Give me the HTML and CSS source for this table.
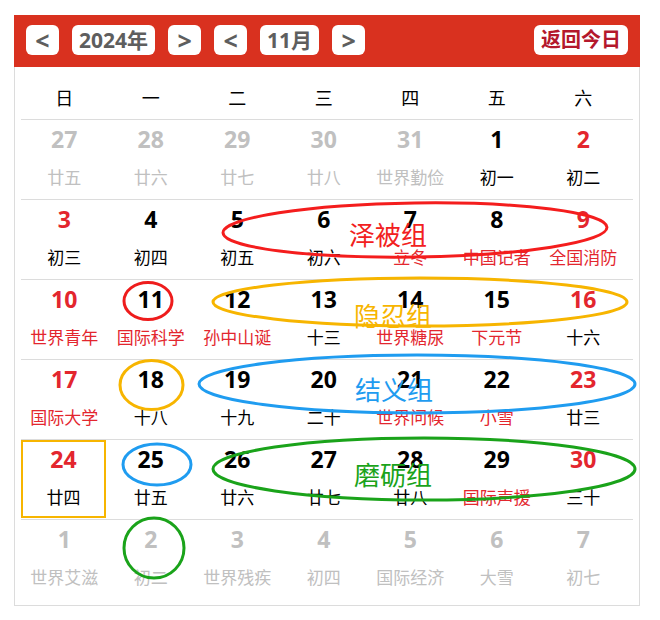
FILE: index.html
```html
<!DOCTYPE html>
<html lang="zh">
<head>
<meta charset="utf-8">
<title>日历</title>
<link rel="stylesheet" href="styles.css">
</head>
<body>
<div class="page">
  <div class="cal">
    <div class="bar">
      <button class="btn arrow">&lt;</button>
      <button class="btn">2024年</button>
      <button class="btn arrow">&gt;</button>
      <button class="btn arrow">&lt;</button>
      <button class="btn">11月</button>
      <button class="btn arrow">&gt;</button>
      <button class="btn today-btn">返回今日</button>
    </div>
    <div class="body">
      <div class="row week">
        <div class="wd">日</div><div class="wd">一</div><div class="wd">二</div><div class="wd">三</div><div class="wd">四</div><div class="wd">五</div><div class="wd">六</div>
      </div>
      <div class="row">
        <div class="cell other"><span class="num">27</span><span class="lunar">廿五</span></div>
        <div class="cell other"><span class="num">28</span><span class="lunar">廿六</span></div>
        <div class="cell other"><span class="num">29</span><span class="lunar">廿七</span></div>
        <div class="cell other"><span class="num">30</span><span class="lunar">廿八</span></div>
        <div class="cell other"><span class="num">31</span><span class="lunar">世界勤俭</span></div>
        <div class="cell"><span class="num">1</span><span class="lunar">初一</span></div>
        <div class="cell weekend"><span class="num">2</span><span class="lunar">初二</span></div>
      </div>
      <div class="row">
        <div class="cell weekend"><span class="num">3</span><span class="lunar">初三</span></div>
        <div class="cell"><span class="num">4</span><span class="lunar">初四</span></div>
        <div class="cell"><span class="num">5</span><span class="lunar">初五</span></div>
        <div class="cell"><span class="num">6</span><span class="lunar">初六</span></div>
        <div class="cell"><span class="num">7</span><span class="lunar fest">立冬</span></div>
        <div class="cell"><span class="num">8</span><span class="lunar fest">中国记者</span></div>
        <div class="cell weekend"><span class="num">9</span><span class="lunar fest">全国消防</span></div>
      </div>
      <div class="row">
        <div class="cell weekend"><span class="num">10</span><span class="lunar fest">世界青年</span></div>
        <div class="cell"><span class="num">11</span><span class="lunar fest">国际科学</span></div>
        <div class="cell"><span class="num">12</span><span class="lunar fest">孙中山诞</span></div>
        <div class="cell"><span class="num">13</span><span class="lunar">十三</span></div>
        <div class="cell"><span class="num">14</span><span class="lunar fest">世界糖尿</span></div>
        <div class="cell"><span class="num">15</span><span class="lunar fest">下元节</span></div>
        <div class="cell weekend"><span class="num">16</span><span class="lunar">十六</span></div>
      </div>
      <div class="row">
        <div class="cell weekend"><span class="num">17</span><span class="lunar fest">国际大学</span></div>
        <div class="cell"><span class="num">18</span><span class="lunar">十八</span></div>
        <div class="cell"><span class="num">19</span><span class="lunar">十九</span></div>
        <div class="cell"><span class="num">20</span><span class="lunar">二十</span></div>
        <div class="cell"><span class="num">21</span><span class="lunar fest">世界问候</span></div>
        <div class="cell"><span class="num">22</span><span class="lunar fest">小雪</span></div>
        <div class="cell weekend"><span class="num">23</span><span class="lunar">廿三</span></div>
      </div>
      <div class="row">
        <div class="cell weekend current"><span class="num">24</span><span class="lunar">廿四</span></div>
        <div class="cell"><span class="num">25</span><span class="lunar">廿五</span></div>
        <div class="cell"><span class="num">26</span><span class="lunar">廿六</span></div>
        <div class="cell"><span class="num">27</span><span class="lunar">廿七</span></div>
        <div class="cell"><span class="num">28</span><span class="lunar">廿八</span></div>
        <div class="cell"><span class="num">29</span><span class="lunar fest">国际声援</span></div>
        <div class="cell weekend"><span class="num">30</span><span class="lunar">三十</span></div>
      </div>
      <div class="row last">
        <div class="cell other"><span class="num">1</span><span class="lunar">世界艾滋</span></div>
        <div class="cell other"><span class="num">2</span><span class="lunar">初二</span></div>
        <div class="cell other"><span class="num">3</span><span class="lunar">世界残疾</span></div>
        <div class="cell other"><span class="num">4</span><span class="lunar">初四</span></div>
        <div class="cell other"><span class="num">5</span><span class="lunar">国际经济</span></div>
        <div class="cell other"><span class="num">6</span><span class="lunar">大雪</span></div>
        <div class="cell other"><span class="num">7</span><span class="lunar">初七</span></div>
      </div>
    </div>
  </div>
  <svg class="marks" viewBox="0 0 660 620" width="660" height="620">
    <g fill="none" stroke-width="3">
      <ellipse cx="415" cy="230" rx="192" ry="27" stroke="#f41d1d" transform="rotate(-0.8 415 230)"/>
      <ellipse cx="148" cy="301" rx="24" ry="18.5" stroke="#ee1c1c"/>
      <ellipse cx="420" cy="302" rx="207" ry="24" stroke="#f7b500"/>
      <ellipse cx="151.5" cy="385" rx="31.5" ry="24.5" stroke="#f7b500"/>
      <ellipse cx="417" cy="384" rx="218" ry="29" stroke="#1f9cf0"/>
      <ellipse cx="157" cy="464.5" rx="34" ry="20.5" stroke="#1f9cf0"/>
      <ellipse cx="424" cy="469" rx="211" ry="31" stroke="#1aa31a"/>
      <ellipse cx="154" cy="548" rx="30" ry="30" stroke="#1aa31a"/>
    </g>
    <g class="tag">
      <text x="388" y="233" fill="#f22020">泽被组</text>
      <text x="393" y="314" fill="#f7b500">隐忍组</text>
      <text x="394" y="388" fill="#1f9cf0">结义组</text>
      <text x="393" y="473" fill="#1aa31a">磨砺组</text>
    </g>
  </svg>
</div>
</body>
</html>
```
FILE: styles.css
```css
* { box-sizing: border-box; }
html, body { margin: 0; padding: 0; background: #fff; }
body {
  font-family: "Noto Sans", "Noto Sans CJK SC", sans-serif;
  color: #000;
}
.page {
  position: relative;
  width: 660px;
  height: 620px;
  padding: 15px 20px 0 14px;
}
.cal { width: 626px; }
.bar {
  background: #d9311f;
  height: 52px;
  padding: 10px 12px 12px 12px;
  display: flex;
  align-items: flex-start;
  gap: 13px;
}
.btn {
  font-family: "Noto Sans", "Noto Sans CJK SC", sans-serif;
  border: 0;
  margin: 0;
  background: #fff;
  border-radius: 6px;
  height: 30px;
  line-height: 30px;
  padding: 0 7px;
  font-size: 21px;
  font-weight: 700;
  color: #5e5e5e;
}
.arrow { width: 33px; padding: 0; font-size: 25px; line-height: 29px; }
.today-btn { margin-left: auto; color: #b4182c; font-size: 20px; padding: 0 7px; }
.body {
  border: 1px solid #dcdcdc;
  border-top: 0;
  padding: 0 6px 6px 6px;
}
.row {
  display: grid;
  grid-template-columns: repeat(7, 86.5px);
  border-bottom: 1px solid #dcdcdc;
  height: 80px;
}
.row.last { border-bottom: 0; height: 79px; }
.row.week { height: 53px; }
.wd {
  text-align: center;
  font-family: "Noto Sans CJK SC", sans-serif;
  font-size: 18px;
  line-height: 28px;
  padding-top: 16px;
}
.cell {
  display: flex;
  flex-direction: column;
  align-items: center;
  padding-top: 5px;
  height: 79px;
}
.num {
  font-size: 23px;
  font-weight: 700;
  line-height: 28px;
}
.lunar {
  margin-top: 12px;
  font-family: "Noto Sans CJK SC", sans-serif;
  font-size: 17px;
  line-height: 24px;
}
.weekend .num { color: #e3262e; }
.fest { color: #e3262e; }
.other .num, .other .lunar { color: #c0c0c0; }
.current {
  border: 2px solid #f7b500;
  width: 85px;
  height: 78px;
  padding-top: 3px;
}
.marks {
  position: absolute;
  left: 0;
  top: 0;
  pointer-events: none;
}
.tag text {
  font-family: "Noto Sans CJK SC", sans-serif;
  font-size: 26px;
  text-anchor: middle;
  dominant-baseline: central;
}
```
